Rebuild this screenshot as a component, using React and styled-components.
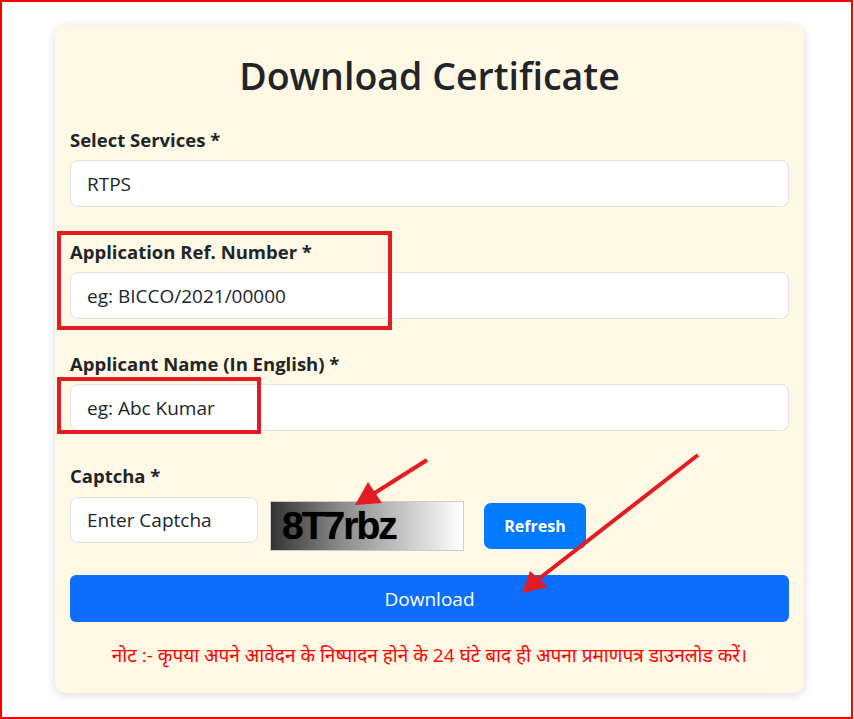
import React from 'react';
import styled, { createGlobalStyle } from 'styled-components';

const GlobalStyle = createGlobalStyle`
  * {
    box-sizing: border-box;
  }
  body {
    margin: 0;
    background: #ffffff;
    font-family: 'Open Sans', 'Noto Sans', sans-serif;
    color: #212529;
  }
`;

const Frame = styled.div`
  position: relative;
  width: 853px;
  height: 719px;
  border: 2px solid #ff0000;
  padding: 23px 0 0 53px;
`;

const Card = styled.div`
  width: 749px;
  background: #fef8e5;
  border-radius: 10px;
  box-shadow: 0 2px 10px rgba(0, 0, 0, 0.15);
  padding: 27px 15px 24px;
`;

const Title = styled.h1`
  margin: 0 0 26px;
  text-align: center;
  font-size: 37.5px;
  line-height: 48px;
  font-weight: 600;
  color: #212529;
`;

const Group = styled.div`
  margin-bottom: ${(p) => (p.$last ? 8 : 31)}px;
`;

const Label = styled.label`
  display: block;
  margin-bottom: 7px;
  font-size: 18.5px;
  line-height: 27px;
  font-weight: 700;
  color: #212529;
`;

const Input = styled.input`
  display: block;
  width: ${(p) => p.$width || '100%'};
  height: ${(p) => p.$height || 47}px;
  padding: 0 16px;
  border: 1px solid #dee2e6;
  border-radius: 8px;
  background: #ffffff;
  font-family: inherit;
  font-size: 19px;
  color: #212529;
  outline: none;
  &::placeholder {
    color: #212529;
    opacity: 1;
  }
`;

const CaptchaRow = styled.div`
  display: flex;
  align-items: flex-start;
  margin-bottom: 24px;
`;

const CaptchaImage = styled.div`
  width: 194px;
  height: 50px;
  margin: 4px 0 0 12px;
  border: 1px solid #cccccc;
  background: linear-gradient(to right, #333333, #888888 35%, #ffffff);
  padding-left: 11px;
  font-family: 'Liberation Sans', Arial, sans-serif;
  font-weight: 700;
  font-size: 39px;
  line-height: 48px;
  letter-spacing: -2px;
  color: #000000;
  text-shadow: 0 0 1px rgba(0, 0, 0, 0.6);
  user-select: none;
`;

const Button = styled.button`
  display: flex;
  align-items: center;
  justify-content: center;
  border: none;
  color: #ffffff;
  font-family: inherit;
  cursor: pointer;
`;

const RefreshButton = styled(Button)`
  width: 102px;
  height: 46px;
  margin: 6px 0 0 20px;
  border-radius: 7px;
  background: #007bff;
  font-size: 16px;
  font-weight: 700;
`;

const DownloadButton = styled(Button)`
  width: 100%;
  height: 47px;
  border-radius: 6px;
  background: #0d6efd;
  font-size: 19px;
`;

const Note = styled.p`
  margin: 20px 0 0;
  text-align: center;
  font-size: 19px;
  line-height: 27px;
  color: #ff0000;
`;

const Annotations = styled.svg`
  position: absolute;
  top: -2px;
  left: -2px;
  pointer-events: none;
`;

const fields = [
  { label: 'Select Services *', value: 'RTPS' },
  { label: 'Application Ref. Number *', placeholder: 'eg: BICCO/2021/00000' },
  { label: 'Applicant Name (In English) *', placeholder: 'eg: Abc Kumar' },
];

const annotationRed = '#e31b23';

const App = () => (
  <>
    <GlobalStyle />
    <Frame>
      <Card>
        <Title>Download Certificate</Title>
        {fields.map((f) => (
          <Group key={f.label}>
            <Label>{f.label}</Label>
            <Input defaultValue={f.value} placeholder={f.placeholder} />
          </Group>
        ))}
        <Group $last>
          <Label>Captcha *</Label>
        </Group>
        <CaptchaRow>
          <Input $width="188px" $height={46} placeholder="Enter Captcha" />
          <CaptchaImage>8T7rbz</CaptchaImage>
          <RefreshButton>Refresh</RefreshButton>
        </CaptchaRow>
        <DownloadButton>Download</DownloadButton>
        <Note>नोट :- कृपया अपने आवेदन के निष्पादन होने के 24 घंटे बाद ही अपना प्रमाणपत्र डाउनलोड करें।</Note>
      </Card>
      <Annotations width="854" height="719" viewBox="0 0 854 719">
        <rect x="59" y="233" width="331" height="95" fill="none" stroke={annotationRed} strokeWidth="4" />
        <rect x="59" y="379" width="200" height="53" fill="none" stroke={annotationRed} strokeWidth="4" />
        <line x1="427" y1="460" x2="370" y2="496" stroke={annotationRed} strokeWidth="4" />
        <polygon points="355,505 368,482 382,503" fill={annotationRed} />
        <line x1="698" y1="455" x2="536" y2="581" stroke={annotationRed} strokeWidth="4" />
        <polygon points="522,593 530,571 548,587" fill={annotationRed} />
      </Annotations>
    </Frame>
  </>
);

export default App;
